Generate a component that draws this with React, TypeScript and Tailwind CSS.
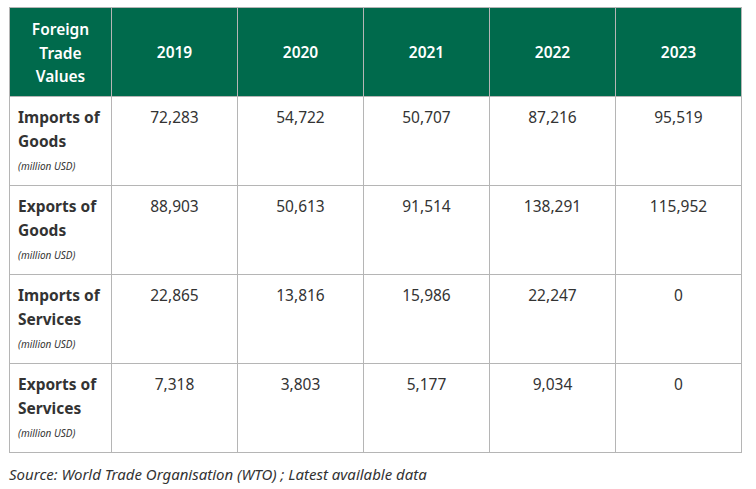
const years = ["2019", "2020", "2021", "2022", "2023"]

const rows = [
  { label: ["Imports of", "Goods"], values: ["72,283", "54,722", "50,707", "87,216", "95,519"] },
  { label: ["Exports of", "Goods"], values: ["88,903", "50,613", "91,514", "138,291", "115,952"] },
  { label: ["Imports of", "Services"], values: ["22,865", "13,816", "15,986", "22,247", "0"] },
  { label: ["Exports of", "Services"], values: ["7,318", "3,803", "5,177", "9,034", "0"] },
]

export default function App() {
  return (
    <div className="w-[756px] h-[489px] bg-white pl-[9px] pt-[7px] font-['Noto_Sans',sans-serif] text-[#333333]">
      <table className="border-collapse table-fixed w-[733px]">
        <colgroup>
          <col className="w-[102px]" />
          {years.map((y) => (
            <col key={y} className="w-[126px]" />
          ))}
        </colgroup>
        <thead>
          <tr className="h-[89px] bg-[#006a4c] text-white">
            <th className="border border-[#b5b5b5] px-1 pt-[3px] text-[15.5px] leading-[23.5px] font-semibold">
              Foreign
              <br />
              Trade
              <br />
              Values
            </th>
            {years.map((y) => (
              <th key={y} className="border border-[#b5b5b5] pt-[2px] text-[15.5px] font-semibold">
                {y}
              </th>
            ))}
          </tr>
        </thead>
        <tbody>
          {rows.map((r) => (
            <tr key={r.label.join(" ")} className="h-[89px]">
              <td className="border border-[#b5b5b5] align-top pl-[8px] pr-0 pt-[8px]">
                <div className="text-[15.5px] leading-[24px] font-bold whitespace-nowrap">{r.label[0]}</div>
                <div className="text-[15.5px] leading-[24px] font-bold">{r.label[1]}</div>
                <div className="text-[10px] italic leading-[26px]">(million USD)</div>
              </td>
              {r.values.map((v, i) => (
                <td key={i} className="border border-[#b5b5b5] align-top text-center pt-[8px] text-[15.5px] leading-[24px]">
                  {v}
                </td>
              ))}
            </tr>
          ))}
        </tbody>
      </table>
      <p className="mt-[11px] text-[15px] italic leading-[20px]">
        Source: World Trade Organisation (WTO) ; Latest available data
      </p>
    </div>
  )
}
